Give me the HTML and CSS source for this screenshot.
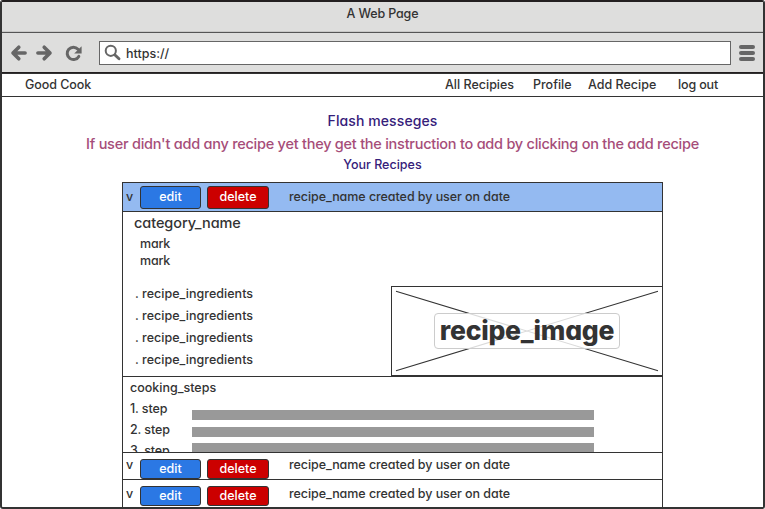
FILE: index.html
```html
<!DOCTYPE html>
<html lang="en">
<head>
<meta charset="utf-8">
<title>Good Cook</title>
<link rel="stylesheet" href="styles.css">
</head>
<body>
<div class="window">
  <header class="titlebar"><span class="title">A Web Page</span></header>
  <div class="toolbar">
    <svg class="arrows" width="76" height="20" viewBox="0 0 76 20" fill="none" stroke="#666" stroke-width="3.6" stroke-linecap="round" stroke-linejoin="round">
      <path d="M9.8 4.2 4 10l5.8 5.8M4.8 10h11.3"/>
      <path d="M35.2 4.2 41 10l-5.8 5.8M40.2 10H28.9"/>
      <path d="M69.8 13.4a6.2 6.2 0 1 1-.8-7.2" stroke-width="3"/>
      <path d="M72.6 3.2v7.3h-7.4z" fill="#666" stroke="none"/>
    </svg>
    <div class="address">
      <svg width="18" height="18" viewBox="0 0 18 18" fill="none" stroke="#666"><circle cx="5.8" cy="6.8" r="5.1" stroke-width="2"/><path d="M10 11l4 3.8" stroke-width="2.9" stroke-linecap="round"/></svg>
      <span class="url">https://</span>
    </div>
    <div class="menu"><i></i><i></i><i></i></div>
  </div>
  <nav class="nav">
    <span class="brand">Good Cook</span>
    <span class="link-all">All Recipies</span>
    <span class="link-profile">Profile</span>
    <span class="link-add">Add Recipe</span>
    <span class="link-out">log out</span>
  </nav>
  <main>
    <p class="flash">Flash messeges</p>
    <p class="hint">If user didn't add any recipe yet they get the instruction to add by clicking on the add recipe</p>
    <p class="heading">Your Recipes</p>
    <section class="recipes">
      <div class="row open">
        <span class="toggle">v</span><span class="btn edit">edit</span><span class="btn delete">delete</span><span class="name">recipe_name created by user on date</span>
      </div>
      <div class="details">
        <div class="info">
          <div class="category">category_name</div>
          <div class="mark">mark</div>
          <div class="mark">mark</div>
          <ul class="ingredients">
            <li>. recipe_ingredients</li><li>. recipe_ingredients</li><li>. recipe_ingredients</li><li>. recipe_ingredients</li>
          </ul>
        </div>
        <div class="image">
          <svg class="cross" width="270" height="88" viewBox="0 0 270 88" stroke="#333" stroke-width="1.1"><path d="M4 4.2 266 83.8M4 83.8 266 4.2"/></svg>
          <span class="caption"><b>recipe_image</b></span>
        </div>
      </div>
      <div class="steps">
        <div class="steps-title">cooking_steps</div>
        <div class="step-grid">
          <div class="step-labels"><span>1. step</span><span>2. step</span><span>3. step</span></div>
          <div class="bars"><i></i><i></i><i></i></div>
        </div>
      </div>
      <div class="row second">
        <span class="toggle">v</span><span class="btn edit">edit</span><span class="btn delete">delete</span><span class="name">recipe_name created by user on date</span>
      </div>
      <div class="row third">
        <span class="toggle">v</span><span class="btn edit">edit</span><span class="btn delete">delete</span><span class="name">recipe_name created by user on date</span>
      </div>
    </section>
  </main>
</div>
</body>
</html>
```
FILE: styles.css
```css
* { box-sizing: border-box; }
body { margin: 0; background: #fff; color: #333; font: 500 12.5px/18px Inter, "Liberation Sans", sans-serif; font-feature-settings: "cv11", "calt" 0; overflow: hidden; }
p, ul { margin: 0; padding: 0; list-style: none; }
span, li, .category, .mark, .steps-title, p { white-space: nowrap; }
i { display: block; }

.window { width: 765px; height: 509px; border: 2px solid #333; border-top-color: #231f20; border-radius: 3px; }
.titlebar { height: 31px; background: #dededd; border-bottom: 1px solid #555; box-shadow: inset 0 -1px #c8c8c7; text-align: center; padding-top: 3px; letter-spacing: -.15px; }
.toolbar { height: 41px; background: #dededd; border-bottom: 2px solid #231f20; display: flex; align-items: center; padding: 0 8px 0 7px; }
.arrows { flex: none; }
.address { width: 632px; height: 24px; margin-left: 14px; background: #fff; border: 1px solid #666; display: flex; align-items: center; padding-left: 5px; }
.address svg { overflow: visible; }
.url { margin-left: 3px; padding-top: 2px; }
.menu { display: grid; gap: 2px; margin-left: 8px; }
.menu i { width: 16px; height: 4px; border-radius: 2px; background: #666; }

.nav { height: 24px; margin: -1px -1px 0; border: 1px solid #333; display: flex; padding: 2px 0 0 23px; background: #fff; }
.brand { width: 420px; letter-spacing: -.06px; }
.link-all { width: 88px; }
.link-profile { width: 55px; }
.link-add { width: 90px; }
.link-out { letter-spacing: -.15px; }

.flash, .hint, .heading { text-align: center; }
.flash { font-size: 14px; line-height: 22px; margin-top: 13px; color: #35207a; letter-spacing: .1px; }
.hint { font-size: 14.5px; line-height: 22px; margin: 1px 0 0 20px; color: #a64d79; letter-spacing: -.25px; }
.heading { line-height: 18px; margin-top: 1px; color: #35207a; }

.recipes { width: 541px; height: 327px; margin: 8px 0 0 120px; border: 1px solid #333; }
.row { display: flex; border-bottom: 1px solid #333; }
.toggle { width: 17px; padding-left: 3px; }
.btn { height: 23px; border: 1px solid #333; border-radius: 3px; color: #fff; text-align: center; line-height: 20px; }
.edit { width: 61px; background: #2b78e4; }
.delete { width: 62px; margin-left: 6px; background: #c00; }
.name { margin-left: 20px; letter-spacing: -.06px; }
.open { height: 29px; padding-top: 3px; background: #94baf1; }
.open .toggle, .open .name { padding-top: 2px; }

.details { height: 165px; border-bottom: 1px solid #333; display: flex; justify-content: space-between; }
.category { font-size: 14.5px; line-height: 20px; padding: 1px 0 1px 11px; letter-spacing: -.07px; }
.mark { padding-left: 17px; line-height: 17px; letter-spacing: -.2px; }
.mark:nth-child(2) { margin-top: 1px; }
.ingredients { margin: 14px 0 0 12px; }
.ingredients li { line-height: 22px; letter-spacing: .03px; }
.image { width: 272px; height: 90px; margin: 74px -1px 0 0; border: 1px solid #333; display: grid; place-items: center; }
.cross, .caption { grid-area: 1 / 1; }
.caption { position: relative; width: 186px; height: 36px; border: 1px solid #ccc; border-radius: 4px; background: rgba(255, 255, 255, .82); font-size: 26.5px; line-height: 32px; text-align: center; }
.caption b { font-weight: 800; letter-spacing: -.25px; }

.steps { height: 76px; overflow: hidden; border-bottom: 1px solid #333; padding-left: 7px; }
.steps-title { padding-top: 2px; }
.step-grid { display: flex; }
.step-labels { width: 62px; padding-top: 1px; letter-spacing: -.12px; }
.step-labels span { display: block; line-height: 21px; }
.bars { padding-top: 13px; display: grid; gap: 7px; align-content: start; }
.bars i { width: 402px; height: 10px; background: #999; }
.bars i:last-child { margin-top: -1px; }

.second { height: 27px; padding-top: 3px; }
.third { height: 29px; padding-top: 5px; border: 0; }
.second .btn, .third .btn { height: 20px; line-height: 18px; }
.second .btn { margin-top: 3px; }
.third .btn { margin-top: 1px; }
```
